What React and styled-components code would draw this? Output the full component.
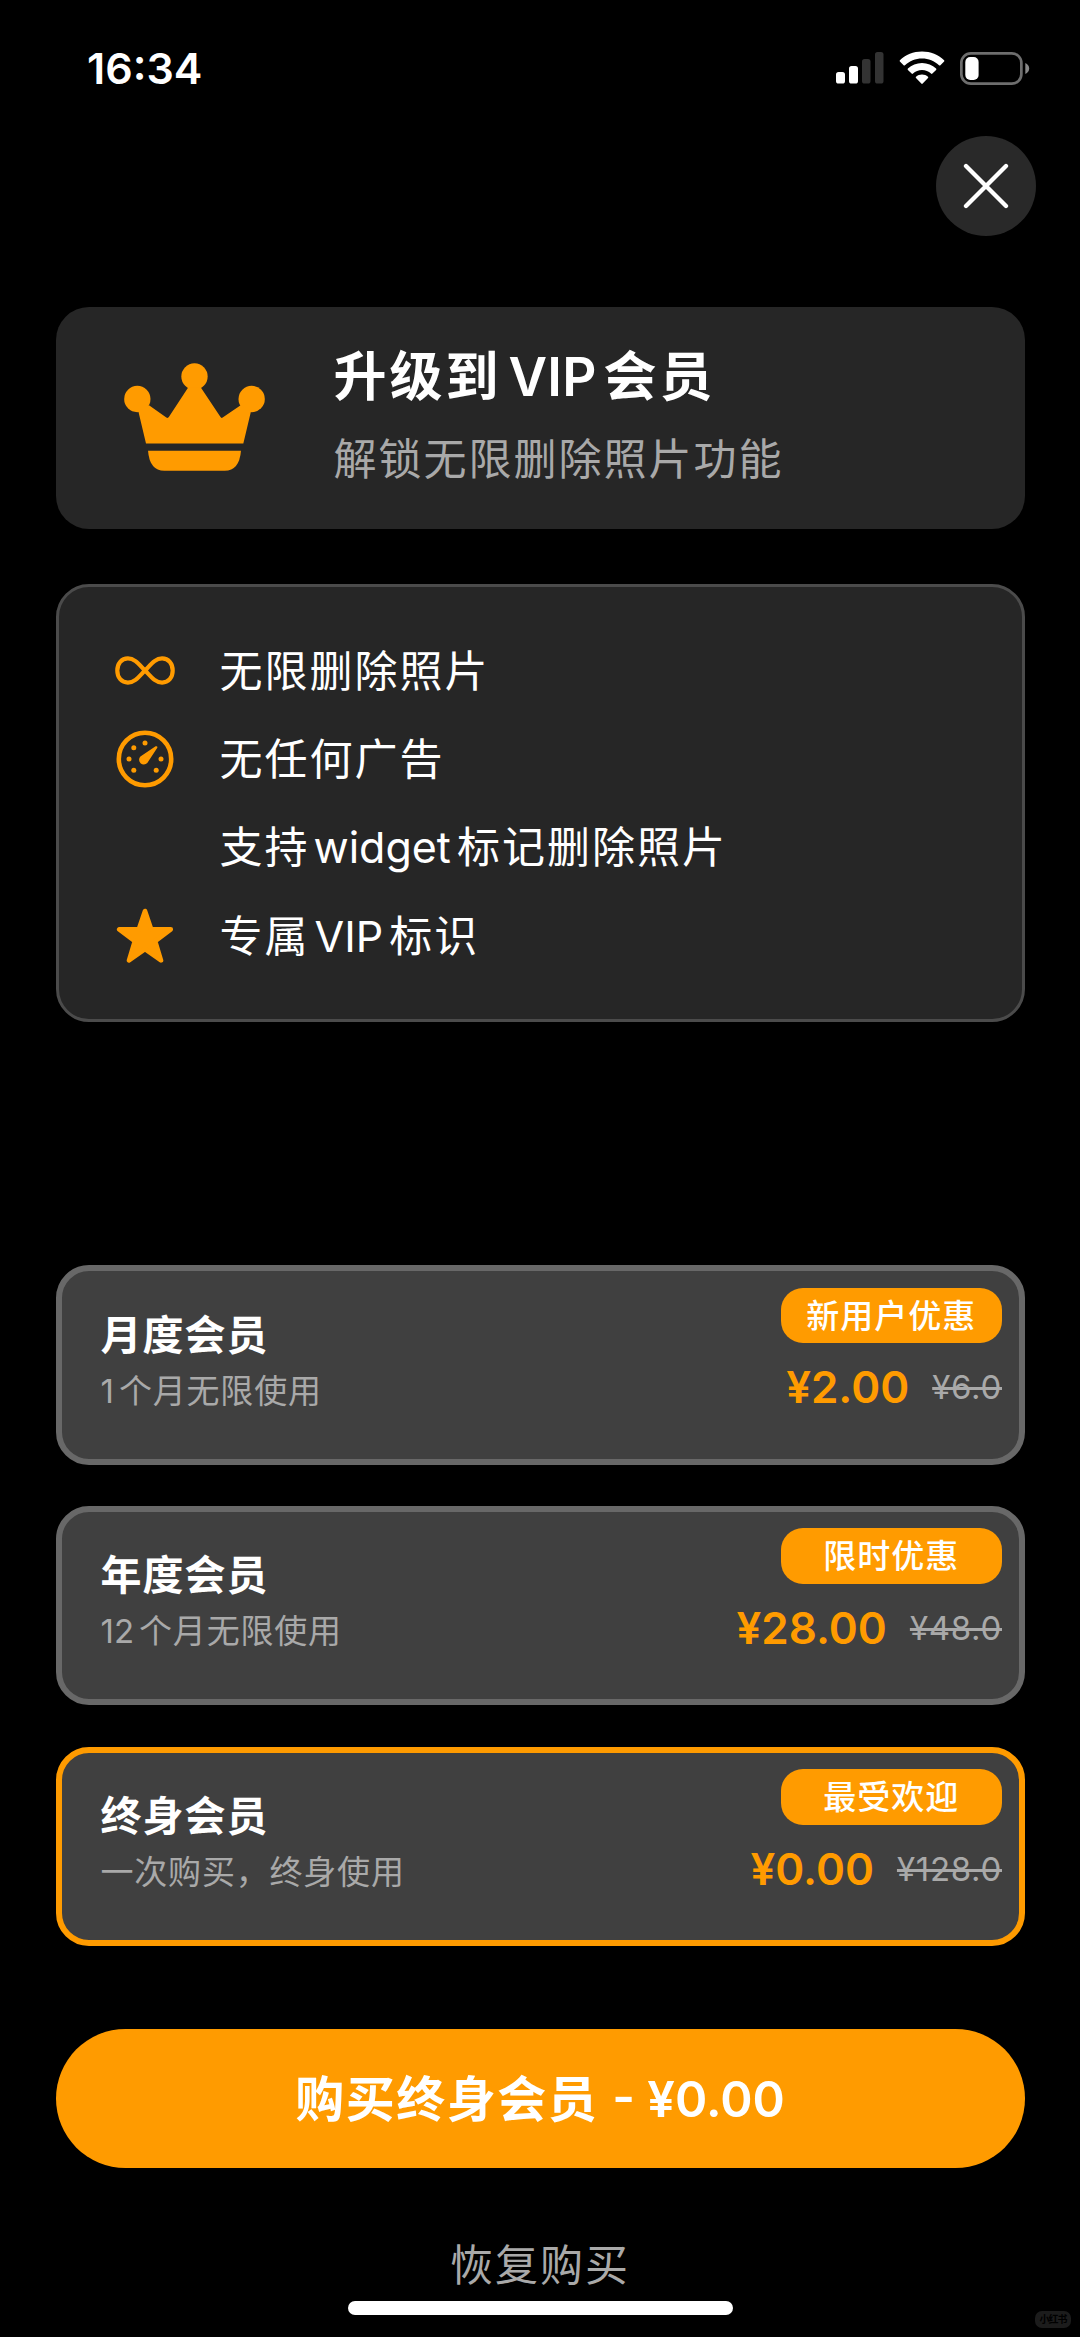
import React, { useState } from "react";
import styled, { createGlobalStyle } from "styled-components";

const plans = [
  {
    id: "month",
    name: "月度会员",
    count: "1",
    desc: "个月无限使用",
    badge: "新用户优惠",
    price: "¥2.00",
    old: "¥6.0",
  },
  {
    id: "year",
    name: "年度会员",
    count: "12",
    desc: "个月无限使用",
    badge: "限时优惠",
    price: "¥28.00",
    old: "¥48.0",
  },
  {
    id: "life",
    name: "终身会员",
    desc: "一次购买，终身使用",
    badge: "最受欢迎",
    price: "¥0.00",
    old: "¥128.0",
  },
];

const SignalIcon = () => (
  <svg width="48" height="32" viewBox="0 0 48 32">
    <rect x="0" y="20" width="9" height="11.5" rx="2.6" fill="#fff" />
    <rect x="13" y="14" width="9" height="17.5" rx="2.6" fill="#fff" />
    <rect x="26" y="7" width="8.5" height="24.5" rx="2.6" fill="#333" />
    <rect x="39" y="0" width="8.5" height="31.5" rx="2.6" fill="#333" />
  </svg>
);

const WifiIcon = () => (
  <svg width="46" height="34" viewBox="0 0 46 34" fill="#fff">
    <path d="M23 0.4C14.4 0.4 6.6 3.7 0.9 9.2C0.5 9.6 0.5 10.2 0.9 10.6L4.6 14.3C5 14.7 5.6 14.7 6 14.3C10.5 10.1 16.4 7.5 23 7.5C29.6 7.5 35.5 10.1 40 14.3C40.4 14.7 41 14.7 41.4 14.3L45.1 10.6C45.5 10.2 45.5 9.6 45.1 9.2C39.4 3.7 31.6 0.4 23 0.4Z" />
    <path d="M23 12C17.6 12 12.6 14.1 8.9 17.5C8.5 17.9 8.5 18.5 8.9 18.9L12.6 22.6C13 23 13.6 23 14 22.6C16.4 20.4 19.5 19 23 19C26.5 19 29.6 20.4 32 22.6C32.4 23 33 23 33.4 22.6L37.1 18.9C37.5 18.5 37.5 17.9 37.1 17.5C33.4 14.1 28.4 12 23 12Z" />
    <path d="M23 23.5C20.7 23.5 18.6 24.3 17 25.7C16.6 26.1 16.6 26.6 17 27L22.3 32.6C22.7 33 23.3 33 23.7 32.6L29 27C29.4 26.6 29.4 26.1 29 25.7C27.4 24.3 25.3 23.5 23 23.5Z" />
  </svg>
);

const BatteryIcon = () => (
  <svg width="70" height="33" viewBox="0 0 70 33">
    <rect x="1.35" y="1.35" width="60" height="30.3" rx="9.5" fill="none" stroke="#6e6e6e" strokeWidth="2.7" />
    <rect x="5.3" y="5" width="13.3" height="23" rx="5" fill="#fff" />
    <path d="M65.3 11C67.7 12 69.2 14 69.2 16.5C69.2 19 67.7 21 65.3 22Z" fill="#8a8a8a" />
  </svg>
);

const CloseIcon = () => (
  <svg width="46" height="46" viewBox="0 0 46 46" stroke="#fff" strokeWidth="4.3" strokeLinecap="round">
    <path d="M3 3L43 43M43 3L3 43" />
  </svg>
);

const CrownIcon = () => (
  <svg width="141" height="108" viewBox="250 219.5 423 324" fill="#ff9b00">
    <circle cx="290" cy="327.5" r="39.5" />
    <circle cx="461.5" cy="260" r="39.5" />
    <circle cx="633" cy="327.5" r="39.5" />
    <path d="M293 364L316 461H608L631 364L600 346L546 383Q542 386 539 381L480 292H443L385 381Q382 386 377 383L325 346Z" />
    <path d="M322 483H601Q596 543 552 543H371Q327 543 322 483Z" />
  </svg>
);

const InfinityIcon = () => (
  <svg width="60" height="29" viewBox="0 0 60 29" fill="none" stroke="#ff9b00" strokeWidth="4.2">
    <path d="M30 14.5C24.5 9 20 2.4 12.9 2.4C6.5 2.4 2.3 7.4 2.3 14.5C2.3 21.6 6.5 26.6 12.9 26.6C20 26.6 24.5 20 30 14.5C35.5 9 40 2.4 47.1 2.4C53.5 2.4 57.7 7.4 57.7 14.5C57.7 21.6 53.5 26.6 47.1 26.6C40 26.6 35.5 20 30 14.5Z" />
  </svg>
);

const GaugeIcon = () => (
  <svg width="58" height="58" viewBox="-29 -29 58 58" fill="#ff9b00">
    <circle r="26.2" fill="none" stroke="#ff9b00" strokeWidth="4.6" />
    <circle cx="0" cy="-16" r="2.5" />
    <circle cx="-11.2" cy="-11.2" r="2.5" />
    <circle cx="-16" cy="0" r="2.5" />
    <circle cx="16" cy="0" r="2.5" />
    <circle cx="-11.2" cy="11.2" r="2.5" />
    <circle cx="11.2" cy="11.2" r="2.5" />
    <path d="M-4.6 -2.6L10.6 -12.7Q12.8 -13.4 12.3 -11.2L2.3 4A4.7 4.7 0 1 1 -4.6 -2.6Z" />
  </svg>
);

const StarIcon = () => (
  <svg width="58" height="56" viewBox="0 0 58 56">
    <path
      d="M29 3L35.2 21.3H54.8L39.2 33.2L45 52.4L29 41.2L13 52.4L18.8 33.2L3.2 21.3H22.8Z"
      fill="#ff9b00"
      stroke="#ff9b00"
      strokeWidth="4.6"
      strokeLinejoin="round"
    />
  </svg>
);

const App = () => {
  const [selected, setSelected] = useState("life");
  const current = plans.find((plan) => plan.id === selected);

  return (
    <>
      <GlobalStyle />
      <Screen>
        <StatusBar>
          <Clock>16:34</Clock>
          <StatusIcons>
            <SignalIcon />
            <WifiIcon />
            <BatteryIcon />
          </StatusIcons>
        </StatusBar>

        <CloseButton>
          <CloseIcon />
        </CloseButton>

        <Hero>
          <CrownIcon />
          <div>
            <HeroTitle>
              升级到<Latin $left={7} $right={7} $spacing={0.2}>VIP</Latin>会员
            </HeroTitle>
            <HeroText>解锁无限删除照片功能</HeroText>
          </div>
        </Hero>

        <Features>
          <Feature>
            <IconSlot><InfinityIcon /></IconSlot>
            无限删除照片
          </Feature>
          <Feature>
            <IconSlot><GaugeIcon /></IconSlot>
            无任何广告
          </Feature>
          <Feature>
            <IconSlot />
            支持<Latin $left={4} $right={6}>widget</Latin>标记删除照片
          </Feature>
          <Feature>
            <IconSlot><StarIcon /></IconSlot>
            专属<Latin $left={5} $right={6}>VIP</Latin>标识
          </Feature>
        </Features>

        <PlanList>
          {plans.map((plan) => (
            <Plan
              key={plan.id}
              $active={plan.id === selected}
              onClick={() => setSelected(plan.id)}
            >
              <PlanInfo>
                <PlanName>{plan.name}</PlanName>
                <PlanDesc>
                  {plan.count && <Latin $right={5}>{plan.count}</Latin>}
                  {plan.desc}
                </PlanDesc>
              </PlanInfo>
              <PlanSide>
                <Badge>{plan.badge}</Badge>
                <Prices>
                  <Price>{plan.price}</Price>
                  <OldPrice>{plan.old}</OldPrice>
                </Prices>
              </PlanSide>
            </Plan>
          ))}
        </PlanList>

        <BuyButton>
          购买{current.name}
          <Latin $left={14}>- {current.price}</Latin>
        </BuyButton>
        <Restore>恢复购买</Restore>
        <HomeBar />
        <Watermark>小红书</Watermark>
      </Screen>
    </>
  );
};

const GlobalStyle = createGlobalStyle`
  * {
    box-sizing: border-box;
  }
  body {
    margin: 0;
    background: #000;
  }
  button {
    border: none;
    padding: 0;
    font: inherit;
    color: inherit;
    cursor: pointer;
  }
  svg {
    display: block;
    flex: none;
  }
`;

const Screen = styled.main`
  position: relative;
  display: flex;
  flex-direction: column;
  width: 1080px;
  height: 2337px;
  padding: 0 55.5px;
  overflow: hidden;
  background: #000;
  color: #fff;
  font-family: Inter, "Noto Sans CJK SC", sans-serif;
  white-space: nowrap;
`;

const Latin = styled.span`
  margin-left: ${({ $left = 0 }) => $left}px;
  margin-right: ${({ $right = 0 }) => $right}px;
  letter-spacing: ${({ $spacing = 0 }) => $spacing}px;
`;

const StatusBar = styled.header`
  display: flex;
  justify-content: space-between;
  height: 135.5px;
  padding: 51px 0 0 31.5px;
  margin-right: -5.5px;
`;

const Clock = styled.div`
  height: 35px;
  font-size: 43px;
  line-height: 35px;
  font-weight: 600;
`;

const StatusIcons = styled.div`
  display: flex;
  align-items: center;
  gap: 15px;
  height: 34px;
`;

const CloseButton = styled.button`
  display: flex;
  flex: none;
  align-items: center;
  justify-content: center;
  align-self: flex-end;
  width: 100px;
  height: 100px;
  margin-right: -11.5px;
  border-radius: 50%;
  background: #292929;
`;

const Hero = styled.section`
  display: flex;
  flex: none;
  gap: 69px;
  height: 222px;
  margin-top: 71.5px;
  padding: 36px 0 0 68px;
  border-radius: 33px;
  background: #262626;

  > svg {
    margin-top: 20px;
  }
`;

const HeroTitle = styled.h1`
  margin: 0;
  font-size: 53px;
  line-height: 68px;
  font-weight: 600;
  letter-spacing: 3px;
`;

const HeroText = styled.p`
  margin: 21px 0 0;
  color: #a9a9a9;
  font-size: 43px;
  line-height: 54px;
  letter-spacing: 2px;
`;

const Features = styled.ul`
  flex: none;
  height: 438px;
  margin: 55px 0 0;
  padding: 39.5px 0 0 52px;
  list-style: none;
  border: 3px solid #4b4b4b;
  border-radius: 33px;
  background: #262626;
`;

const Feature = styled.li`
  display: flex;
  align-items: center;
  height: 88.4px;
  font-size: 43px;
  line-height: 54px;
  letter-spacing: 2px;
`;

const IconSlot = styled.span`
  display: flex;
  justify-content: center;
  width: 68px;
  margin-right: 41px;
`;

const PlanList = styled.div`
  display: flex;
  flex-direction: column;
  gap: 41.3px;
  margin-top: 243px;
`;

const Plan = styled.div`
  display: flex;
  justify-content: space-between;
  height: 199.6px;
  padding: 16.5px 16.5px 0 39px;
  border: 6px solid ${({ $active }) => ($active ? "#ff9b00" : "#686868")};
  border-radius: 33px;
  background: #404040;
  cursor: pointer;
`;

const PlanInfo = styled.div`
  padding-top: 21px;
`;

const PlanName = styled.h2`
  margin: 0;
  font-size: 41px;
  line-height: 52px;
  font-weight: 600;
  letter-spacing: 1px;
`;

const PlanDesc = styled.p`
  margin: 9px 0 0;
  color: #a9a9a9;
  font-size: 33px;
  line-height: 42px;
  letter-spacing: 0.8px;
`;

const PlanSide = styled.div`
  display: flex;
  flex-direction: column;
  align-items: flex-end;
`;

const Badge = styled.span`
  width: 221.5px;
  height: 55.5px;
  border-radius: 22px;
  background: #ff9b00;
  font-size: 33px;
  line-height: 57px;
  font-weight: 500;
  letter-spacing: 1px;
  text-align: center;
`;

const Prices = styled.div`
  display: flex;
  align-items: center;
  gap: 23px;
  margin-top: 17px;
`;

const Price = styled.span`
  color: #ff9b00;
  font-size: 44px;
  line-height: 54px;
  font-weight: 600;
`;

const OldPrice = styled.span`
  color: #a9a9a9;
  font-size: 33px;
  line-height: 42px;
  letter-spacing: 0.7px;
  text-decoration: line-through;
  text-decoration-thickness: 3px;
`;

const BuyButton = styled.button`
  flex: none;
  height: 138.5px;
  margin-top: 83px;
  padding-top: 2px;
  border-radius: 70px;
  background: #ff9b00;
  font-size: 49px;
  line-height: 60px;
  font-weight: 600;
  letter-spacing: 1.5px;
`;

const Restore = styled.button`
  margin-top: 67px;
  background: none;
  color: #a9a9a9;
  font-size: 43px;
  line-height: 60px;
  letter-spacing: 2px;
`;

const HomeBar = styled.div`
  align-self: center;
  flex: none;
  width: 385px;
  height: 14px;
  margin-top: 6px;
  border-radius: 7px;
  background: #fff;
`;

const Watermark = styled.span`
  position: absolute;
  right: 9px;
  bottom: 9px;
  width: 36px;
  height: 17px;
  border-radius: 7px;
  background: #1c1c1c;
  color: #000;
  font-size: 10px;
  line-height: 17px;
  font-weight: 700;
  letter-spacing: -1px;
  text-align: center;
`;

export default App;
